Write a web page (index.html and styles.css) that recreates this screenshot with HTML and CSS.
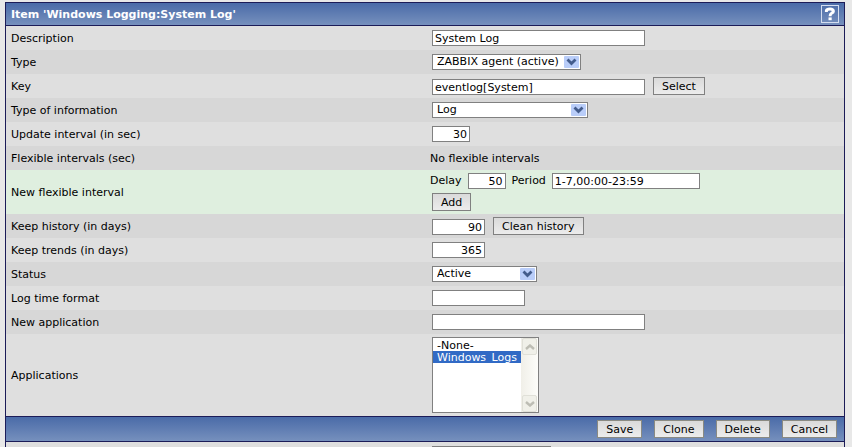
FILE: index.html
```html
<!DOCTYPE html>
<html lang="en">
<head>
<meta charset="UTF-8">
<meta name="viewport" content="width=device-width, initial-scale=1.0">
<title>Configuration of items</title>
<link rel="stylesheet" href="styles.css">
</head>
<body>

<form class="item-form" onsubmit="return false">
    <!-- Header -->
    <div class="form-header">
        <h1>Item 'Windows Logging:System Log'</h1>
        <a class="help" href="#help" aria-label="Help">
            <svg width="18" height="18" viewBox="0 0 18 18">
                <rect x="0.5" y="0.5" width="17" height="17" fill="none" stroke="#d5def0"/>
                <path d="M5.4 7V5.6Q5.8 3.9 9 3.9T12.4 6.2Q12.4 7.4 10.6 8.2Q9.1 9 9.1 11.2" fill="none" stroke="#fff" stroke-width="3"/>
                <rect x="7.5" y="12.4" width="3.2" height="2.8" fill="#fff"/>
            </svg>
        </a>
    </div>

    <!-- Fields -->
    <div class="row">
        <label for="description">Description</label>
        <div class="controls"><input type="text" class="wide" id="description" value="System Log"></div>
    </div>
    <div class="row">
        <label for="type">Type</label>
        <div class="controls">
            <select id="type" class="type-select"><option>ZABBIX agent (active)</option></select>
        </div>
    </div>
    <div class="row">
        <label for="key">Key</label>
        <div class="controls">
            <input type="text" class="wide" id="key" value="eventlog[System]">
            <button type="button">Select</button>
        </div>
    </div>
    <div class="row">
        <label for="value_type">Type of information</label>
        <div class="controls">
            <select id="value_type" class="info-select"><option>Log</option></select>
        </div>
    </div>
    <div class="row">
        <label for="delay">Update interval (in sec)</label>
        <div class="controls"><input type="text" class="number" id="delay" value="30"></div>
    </div>
    <div class="row">
        <span>Flexible intervals (sec)</span>
        <span>No flexible intervals</span>
    </div>
    <div class="row new-interval">
        <span>New flexible interval</span>
        <div>
            <div class="interval">
                <label for="new_delay">Delay</label>
                <input type="text" class="number" id="new_delay" value="50">
                <label for="new_period">Period</label>
                <input type="text" class="period" id="new_period" value="1-7,00:00-23:59">
            </div>
            <div class="controls"><button type="button">Add</button></div>
        </div>
    </div>
    <div class="row">
        <label for="history">Keep history (in days)</label>
        <div class="controls">
            <input type="text" class="number days" id="history" value="90">
            <button type="button">Clean history</button>
        </div>
    </div>
    <div class="row">
        <label for="trends">Keep trends (in days)</label>
        <div class="controls"><input type="text" class="number days" id="trends" value="365"></div>
    </div>
    <div class="row">
        <label for="status">Status</label>
        <div class="controls">
            <select id="status" class="status-select"><option>Active</option></select>
        </div>
    </div>
    <div class="row">
        <label for="logtimefmt">Log time format</label>
        <div class="controls"><input type="text" class="medium" id="logtimefmt"></div>
    </div>
    <div class="row">
        <label for="new_application">New application</label>
        <div class="controls"><input type="text" class="wide" id="new_application"></div>
    </div>
    <div class="row">
        <label for="applications">Applications</label>
        <div class="controls">
            <div class="listbox">
                <select id="applications" multiple size="6">
                    <option>-None-</option>
                    <option selected>Windows_Logs</option>
                </select>
                <div class="scroll" aria-hidden="true">
                    <span class="arrow"><svg width="10" height="6" viewBox="0 0 10 6"><path d="M1 5L5 1.5L9 5" fill="none" stroke="#bdbdb4" stroke-width="2.4"/></svg></span>
                    <span class="arrow"><svg width="10" height="6" viewBox="0 0 10 6"><path d="M1 1L5 4.5L9 1" fill="none" stroke="#bdbdb4" stroke-width="2.4"/></svg></span>
                </div>
            </div>
        </div>
    </div>

    <!-- Buttons -->
    <div class="form-footer">
        <button type="submit">Save</button>
        <button type="button">Clone</button>
        <button type="button">Delete</button>
        <button type="button">Cancel</button>
    </div>

    <!-- Group action -->
    <div class="row">
        <span></span>
        <div class="controls">
            <select class="action-select" aria-label="Group action"><option>Add to group</option></select>
        </div>
    </div>
</form>

</body>
</html>
```

FILE: styles.css
```css
* {
    box-sizing: border-box;
}

body {
    margin: 0;
    padding: 2px 7px 0 5px;
    height: 100vh;
    overflow: hidden;
    background-color: #e8e8e8;
    color: #000;
    font: 11px/14px Verdana, "DejaVu Sans", sans-serif;
}

.item-form {
    border: 1px solid #1c1c58;
}

.form-header,
.form-footer {
    display: flex;
    align-items: center;
    background: linear-gradient(#4a6ba8, #7690bd);
}

.form-header {
    justify-content: space-between;
    height: 23px;
    padding: 0 5px;
    border-bottom: 1px solid #1c1c58;
    color: #fff;
}

.form-header h1 {
    margin: 0;
    padding-top: 2px;
    font-size: 11px;
}

.help svg {
    display: block;
}

.form-footer {
    justify-content: flex-end;
    gap: 12px;
    height: 26px;
    padding: 0 7px;
    border-top: 1px solid #1c1c58;
    border-bottom: 1px solid #1c1c58;
}

.row {
    display: grid;
    grid-template-columns: 1fr 1fr;
    align-items: center;
    min-height: 24px;
    background-color: #dfdfdf;
}

.row:nth-child(odd) {
    background-color: #d7d7d7;
}

.row > * {
    padding: 0 5px;
}

.row > label,
.row > span {
    padding-top: 2px;
}

.row.new-interval {
    background-color: #dfefdf;
    padding: 3px 0;
}

.controls {
    display: flex;
    align-items: flex-end;
    gap: 8px;
}

.row .controls {
    padding-left: 7px;
}

.new-interval .controls {
    padding-left: 2px;
    margin-top: 4px;
}

.interval {
    display: flex;
    align-items: center;
    gap: 6px;
}

input,
select,
button {
    margin: 0;
    border: 1px solid #808080;
    border-radius: 0;
    color: #000;
    font: inherit;
}

input {
    height: 16px;
    padding: 0 2px;
    background-color: #fff;
}

.wide {
    width: 213px;
}

.medium {
    width: 93px;
}

.period {
    width: 148px;
}

.number {
    width: 38px;
    text-align: right;
}

.days {
    width: 53px;
}

button {
    height: 18px;
    padding: 2px 8px 0;
    background: linear-gradient(#dadada, #ececec);
}

.form-footer button {
    border-color: #8a8a82;
}

select {
    appearance: none;
    height: 16px;
    padding: 0 18px 0 4px;
    line-height: 14px;
    background: #fff url("data:image/svg+xml,%3Csvg xmlns='http://www.w3.org/2000/svg' width='15' height='12'%3E%3Crect width='15' height='12' rx='1' fill='%23b9cdf9'/%3E%3Cpath d='M3.5 3.5L7.5 7.5L11.5 3.5' fill='none' stroke='%23435c8c' stroke-width='2.8'/%3E%3C/svg%3E") no-repeat right 1px center;
}

.type-select {
    width: 149px;
}

.info-select {
    width: 156px;
}

.status-select {
    width: 105px;
}

.action-select {
    width: 119px;
}

/* list of applications with its scroll bar */
.listbox {
    display: flex;
    width: 107px;
    height: 76px;
    margin: 3px 0;
    border: 1px solid #808080;
    background-color: #fff;
}

.listbox select {
    flex: 1;
    min-width: 0;
    height: auto;
    padding: 1px 0 0;
    border: none;
    background: none;
    overflow: hidden;
    outline: none;
}

.listbox option {
    height: 12px;
    min-height: 12px;
    padding: 0 4px;
    line-height: 12px;
}

.listbox option:checked {
    background: #316ac5 linear-gradient(#316ac5, #316ac5);
    color: #fff;
}

.scroll {
    display: flex;
    flex-direction: column;
    justify-content: space-between;
    width: 17px;
    background: linear-gradient(to right, #f0efe8, #fdfdfa);
}

.arrow {
    display: flex;
    align-items: center;
    justify-content: center;
    height: 17px;
    margin: 0 1px;
    border: 1px solid #e0e0d8;
    border-radius: 2px;
    background-color: #f0f0e9;
}
```
